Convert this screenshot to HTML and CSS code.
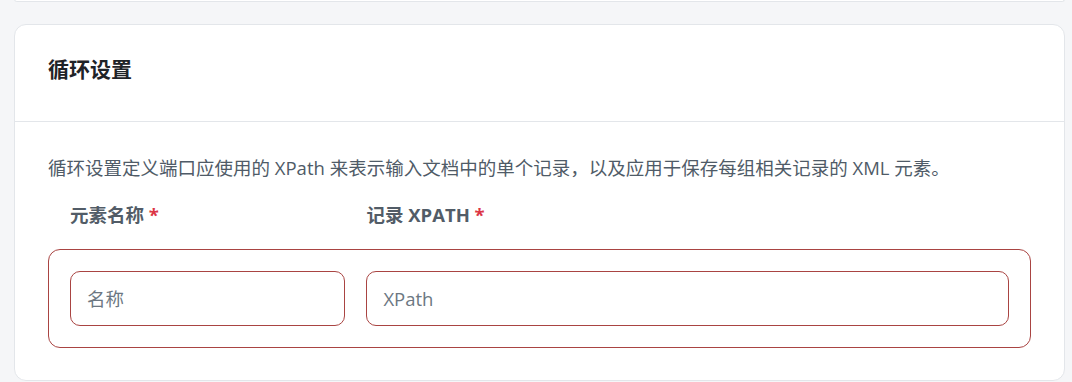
FILE: index.html
```html
<!DOCTYPE html>
<html lang="zh-CN">
<head>
<meta charset="utf-8">
<title>循环设置</title>
<link rel="stylesheet" href="styles.css">
</head>
<body>
  <div class="prev-card"></div>
  <section class="card">
    <header class="card-header">
      <h2 class="card-title">循环设置</h2>
    </header>
    <div class="card-body">
      <p class="desc">循环设置定义端口应使用的 XPath 来表示输入文档中的单个记录，以及应用于保存每组相关记录的 XML 元素。</p>
      <div class="labels">
        <label class="label">元素名称 <span class="req">*</span></label>
        <label class="label">记录 XPATH <span class="req">*</span></label>
      </div>
      <div class="row-box">
        <input class="field" type="text" placeholder="名称">
        <input class="field" type="text" placeholder="XPath">
      </div>
    </div>
  </section>
</body>
</html>
```

FILE: styles.css
```css
* { box-sizing: border-box; }

html, body {
  margin: 0;
  padding: 0;
}

body {
  background: #f5f6f8;
  padding: 0 7px 0 14px;
  font-family: "Open Sans", "Noto Sans CJK SC", sans-serif;
  color: #212529;
}

.prev-card {
  height: 3px;
  margin-top: -1px;
  background: #fff;
  border: 1px solid #e3e6ea;
  border-top: none;
  border-radius: 0 0 12px 12px;
}

.card {
  margin-top: 22px;
  background: #fff;
  border: 1px solid #e3e6ea;
  border-radius: 12px;
}

.card-header {
  height: 97px;
  padding: 29px 33px 0;
  border-bottom: 1px solid #e3e6ea;
}

.card-title {
  margin: 0;
  font-family: "Noto Sans CJK SC", sans-serif;
  font-size: 21px;
  font-weight: 700;
  color: #1f2328;
  line-height: 28px;
}

.card-body {
  padding: 34px 33px 32px;
}

.desc {
  margin: 0;
  font-size: 18.5px;
  line-height: 24px;
  color: #4f5b67;
  white-space: nowrap;
}

.labels {
  margin-top: 23px;
  padding: 0 22px;
  display: grid;
  grid-template-columns: 3fr 7fr;
  column-gap: 21px;
}

.label {
  font-size: 18.5px;
  font-weight: 700;
  line-height: 24px;
  color: #525c67;
}

.req {
  color: #dc3545;
}

.row-box {
  margin-top: 22px;
  padding: 21px;
  border: 1px solid #a94442;
  border-radius: 12px;
  display: grid;
  grid-template-columns: 3fr 7fr;
  column-gap: 21px;
}

.field {
  height: 55px;
  padding: 0 16px;
  border: 1px solid #a94442;
  border-radius: 10px;
  font-family: "Open Sans", "Noto Sans CJK SC", sans-serif;
  font-size: 18.5px;
  color: #212529;
  background: #fff;
  outline: none;
  min-width: 0;
}

.field::placeholder {
  color: #6c7782;
}
```
